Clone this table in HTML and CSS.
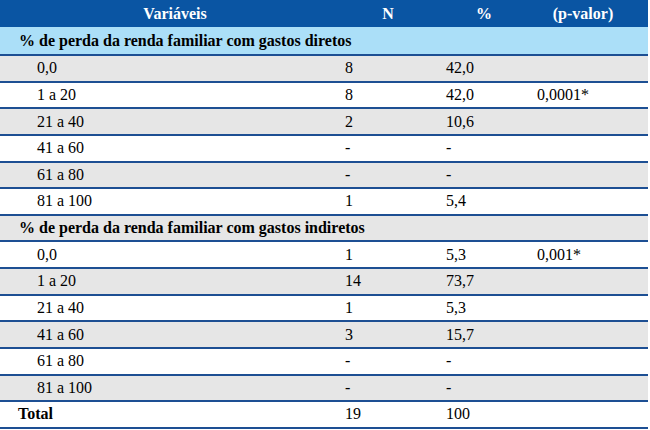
FILE: index.html
```html
<!DOCTYPE html>
<html lang="pt">
<head>
<meta charset="utf-8">
<link rel="stylesheet" href="styles.css">
</head>
<body>
<div class="table">
  <div class="row head">
    <div class="c1">Variáveis</div><div class="c2">N</div><div class="c3">%</div><div class="c4">(p-valor)</div>
  </div>
  <div class="row group first">
    <div class="c1">% de perda da renda familiar com gastos diretos</div><div class="c2"></div><div class="c3"></div><div class="c4"></div>
  </div>
  <div class="row grey"><div class="c1 sub">0,0</div><div class="c2">8</div><div class="c3">42,0</div><div class="c4"></div></div>
  <div class="row"><div class="c1 sub">1 a 20</div><div class="c2">8</div><div class="c3">42,0</div><div class="c4">0,0001*</div></div>
  <div class="row grey"><div class="c1 sub">21 a 40</div><div class="c2">2</div><div class="c3">10,6</div><div class="c4"></div></div>
  <div class="row"><div class="c1 sub">41 a 60</div><div class="c2">-</div><div class="c3">-</div><div class="c4"></div></div>
  <div class="row grey"><div class="c1 sub">61 a 80</div><div class="c2">-</div><div class="c3">-</div><div class="c4"></div></div>
  <div class="row"><div class="c1 sub">81 a 100</div><div class="c2">1</div><div class="c3">5,4</div><div class="c4"></div></div>
  <div class="row grey group"><div class="c1">% de perda da renda familiar com gastos indiretos</div><div class="c2"></div><div class="c3"></div><div class="c4"></div></div>
  <div class="row"><div class="c1 sub">0,0</div><div class="c2">1</div><div class="c3">5,3</div><div class="c4">0,001*</div></div>
  <div class="row grey"><div class="c1 sub">1 a 20</div><div class="c2">14</div><div class="c3">73,7</div><div class="c4"></div></div>
  <div class="row"><div class="c1 sub">21 a 40</div><div class="c2">1</div><div class="c3">5,3</div><div class="c4"></div></div>
  <div class="row grey"><div class="c1 sub">41 a 60</div><div class="c2">3</div><div class="c3">15,7</div><div class="c4"></div></div>
  <div class="row"><div class="c1 sub">61 a 80</div><div class="c2">-</div><div class="c3">-</div><div class="c4"></div></div>
  <div class="row grey"><div class="c1 sub">81 a 100</div><div class="c2">-</div><div class="c3">-</div><div class="c4"></div></div>
  <div class="row last"><div class="c1 total">Total</div><div class="c2">19</div><div class="c3">100</div><div class="c4"></div></div>
</div>
</body>
</html>
```
FILE: styles.css
```css
html, body {
  margin: 0;
  padding: 0;
  background: #ffffff;
}
.table {
  width: 648px;
  font-family: "Liberation Serif", "Times New Roman", serif;
  font-size: 16px;
  color: #000000;
}
.row {
  display: grid;
  grid-template-columns: 335px 106px 86px 121px;
  align-items: center;
  box-sizing: border-box;
  height: 26.64px;
  border-top: 2px solid #1d4f93;
  background: #ffffff;
}
.row.grey {
  background: #e6e6e6;
}
.row.head {
  height: 27px;
  border-top: none;
  background: #0a55a3;
  color: #ffffff;
  font-weight: bold;
}
.row.head > div {
  text-align: center;
  padding-left: 0;
}
.row.head .c1 {
  padding-left: 15px;
}
.row.head .c4 {
  padding-right: 9px;
}
.row.first {
  height: 27px;
  border-top: none;
  background: #abdff8;
}
.row.group .c1 {
  font-weight: bold;
  padding-left: 19px;
  white-space: nowrap;
}
.row.last {
  height: 28.64px;
  border-bottom: 2px solid #1d4f93;
}
.c1 {
  padding-left: 19px;
}
.c1.sub {
  padding-left: 37px;
}
.c1.total {
  font-weight: bold;
  padding-left: 18px;
}
.c2 {
  padding-left: 10px;
}
.c3 {
  padding-left: 5px;
}
.c4 {
  padding-left: 10px;
}
```
